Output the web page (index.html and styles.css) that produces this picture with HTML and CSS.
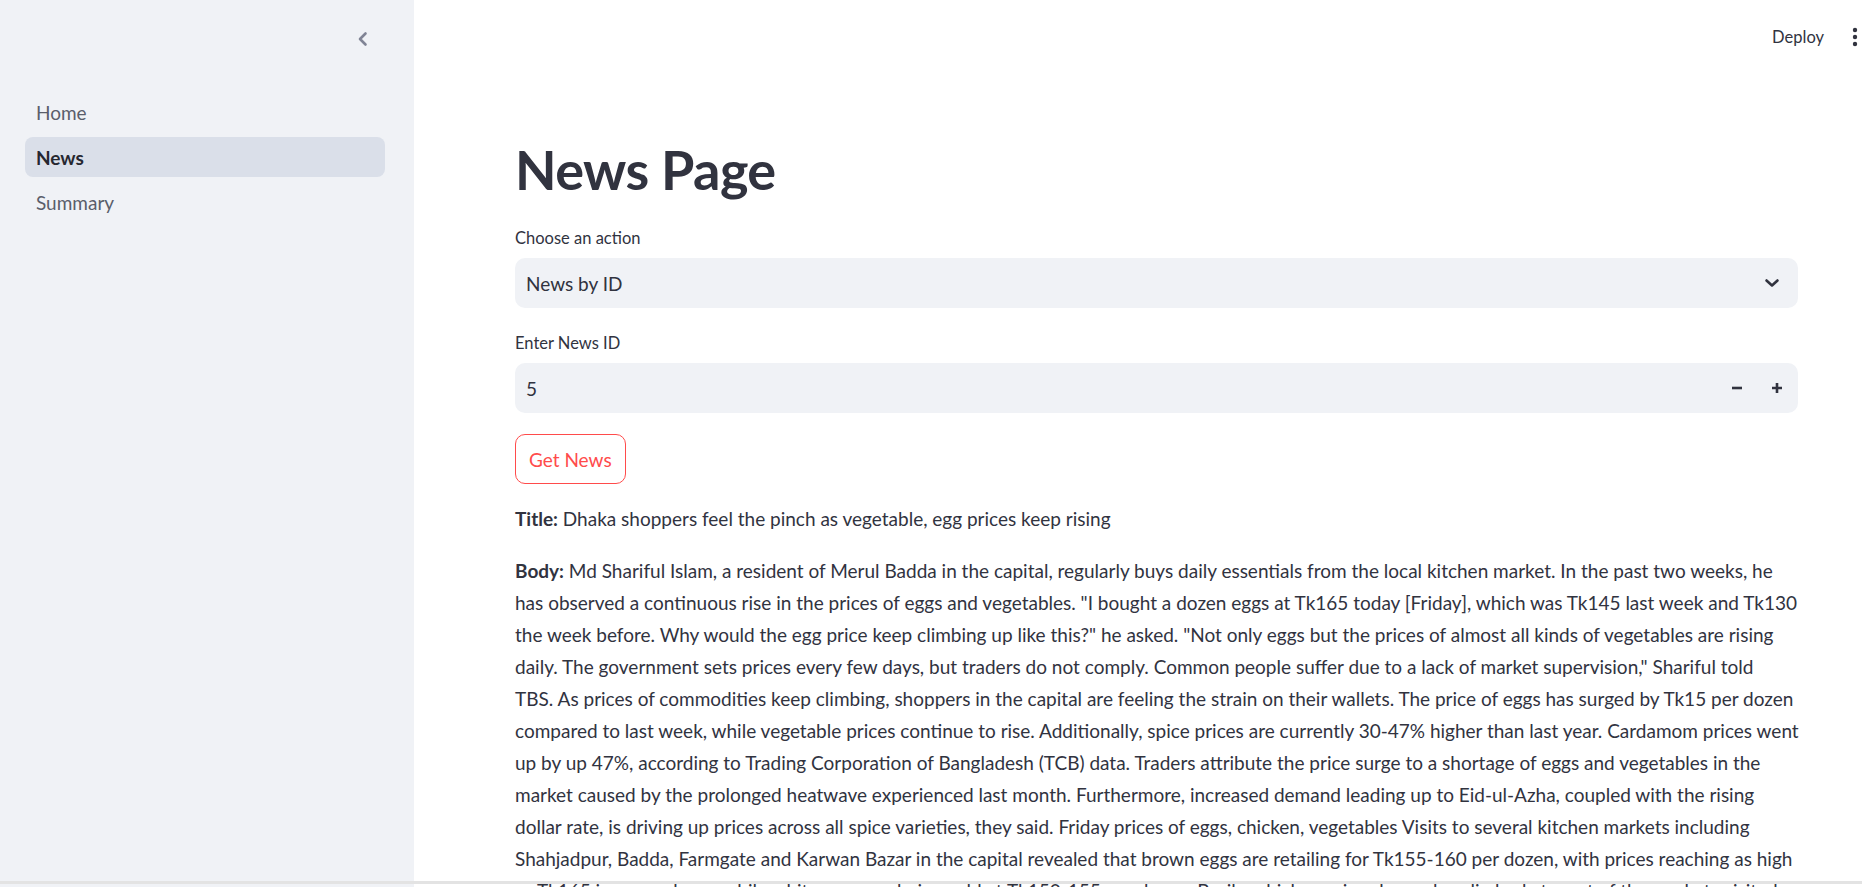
FILE: index.html
```html
<!DOCTYPE html>
<html lang="en">
<head>
<meta charset="utf-8">
<title>News</title>
<link rel="stylesheet" href="styles.css">
</head>
<body>
<div class="app">
  <aside class="sidebar">
    <div class="sidebar-top">
      <button class="collapse-btn" aria-label="Collapse sidebar">
        <svg width="12" height="16" viewBox="0 0 12 16"><path d="M8.5 2.5 L3 8 L8.5 13.5" fill="none" stroke="#808495" stroke-width="2.6" stroke-linecap="round" stroke-linejoin="round"/></svg>
      </button>
    </div>
    <nav class="nav">
      <a class="nav-item">Home</a>
      <a class="nav-item active">News</a>
      <a class="nav-item">Summary</a>
    </nav>
  </aside>
  <main class="main">
    <header class="topbar">
      <span class="deploy">Deploy</span>
      <span class="kebab">
        <svg width="6" height="20" viewBox="0 0 6 20"><circle cx="3" cy="3" r="2.2" fill="#31333f"/><circle cx="3" cy="10" r="2.2" fill="#31333f"/><circle cx="3" cy="17" r="2.2" fill="#31333f"/></svg>
      </span>
    </header>
    <section class="content">
      <h1 class="page-title">News Page</h1>
      <div class="field">
        <label class="field-label">Choose an action</label>
        <div class="select">
          <span>News by ID</span>
          <svg class="select-arrow" width="16" height="10" viewBox="0 0 16 10"><path d="M2.5 2.5 L8 7.5 L13.5 2.5" fill="none" stroke="#31333f" stroke-width="2.6" stroke-linecap="round" stroke-linejoin="round"/></svg>
        </div>
      </div>
      <div class="field">
        <label class="field-label">Enter News ID</label>
        <div class="number-input">
          <span class="number-value">5</span>
          <div class="steppers">
            <span class="step"><svg width="12" height="12" viewBox="0 0 12 12"><path d="M1 6 H11" stroke="#31333f" stroke-width="2.6"/></svg></span>
            <span class="step"><svg width="12" height="12" viewBox="0 0 12 12"><path d="M1 6 H11 M6 1 V11" stroke="#31333f" stroke-width="2.6"/></svg></span>
          </div>
        </div>
      </div>
      <div>
        <button class="btn-outline">Get News</button>
      </div>
      <div class="article">
        <p><strong>Title:</strong> Dhaka shoppers feel the pinch as vegetable, egg prices keep rising</p>
        <p class="body-text"><strong>Body:</strong> Md Shariful Islam, a resident of Merul Badda in the capital, regularly buys daily essentials from the local kitchen market. In the past two weeks, he<br>has observed a continuous rise in the prices of eggs and vegetables. "I bought a dozen eggs at Tk165 today [Friday], which was Tk145 last week and Tk130<br>the week before. Why would the egg price keep climbing up like this?" he asked. "Not only eggs but the prices of almost all kinds of vegetables are rising<br>daily. The government sets prices every few days, but traders do not comply. Common people suffer due to a lack of market supervision," Shariful told<br>TBS. As prices of commodities keep climbing, shoppers in the capital are feeling the strain on their wallets. The price of eggs has surged by Tk15 per dozen<br>compared to last week, while vegetable prices continue to rise. Additionally, spice prices are currently 30-47% higher than last year. Cardamom prices went<br>up by up 47%, according to Trading Corporation of Bangladesh (TCB) data. Traders attribute the price surge to a shortage of eggs and vegetables in the<br>market caused by the prolonged heatwave experienced last month. Furthermore, increased demand leading up to Eid-ul-Azha, coupled with the rising<br>dollar rate, is driving up prices across all spice varieties, they said. Friday prices of eggs, chicken, vegetables Visits to several kitchen markets including<br>Shahjadpur, Badda, Farmgate and Karwan Bazar in the capital revealed that brown eggs are retailing for Tk155-160 per dozen, with prices reaching as high<br>as Tk165 in some shops, while white eggs are being sold at Tk150-155 per dozen. Broiler chicken prices have also climbed at most of the markets visited.</p>
      </div>
    </section>
  </main>
</div>
<div class="bottom-edge"></div>
</body>
</html>
```
FILE: styles.css
```css
* { box-sizing: border-box; }
html, body { margin: 0; padding: 0; }
body {
  font-family: "Lato", "Source Sans Pro", "Noto Sans", sans-serif;
  color: #31333f;
  background: #ffffff;
  font-size: 19px;
}
.app {
  display: flex;
  height: 100vh;
  overflow: hidden;
}
.sidebar {
  width: 414px;
  flex: 0 0 414px;
  background: #f0f2f6;
  padding: 0 29px 0 25px;
}
.sidebar-top {
  height: 80px;
  display: flex;
  justify-content: flex-end;
  align-items: flex-start;
  padding-top: 31px;
  padding-right: 16px;
}
.collapse-btn {
  border: none;
  background: transparent;
  padding: 0;
  width: 12px;
  height: 16px;
  display: flex;
}
.nav {
  display: flex;
  flex-direction: column;
  gap: 5px;
  padding-top: 12px;
}
.nav-item {
  height: 40px;
  display: flex;
  align-items: center;
  padding-left: 11px;
  border-radius: 8px;
  font-size: 19px;
  color: #5a5e6b;
}
.nav-item.active {
  background: #dadfe9;
  color: #262730;
  font-weight: 700;
}
.main {
  flex: 1;
  display: flex;
  flex-direction: column;
  overflow: hidden;
}
.topbar {
  height: 74px;
  flex: 0 0 74px;
  display: flex;
  justify-content: flex-end;
  align-items: center;
  gap: 28px;
  padding-right: 4px;
}
.deploy {
  font-size: 16.5px;
  color: #31333f;
}
.kebab { display: flex; }
.content {
  padding: 63px 64px 0 101px;
  display: flex;
  flex-direction: column;
  gap: 21px;
}
.page-title {
  margin: 0;
  font-size: 54px;
  line-height: 66px;
  font-weight: 700;
  letter-spacing: -0.6px;
  color: #31333f;
}
.field {
  display: flex;
  flex-direction: column;
  gap: 6px;
}
.field-label {
  font-size: 16.5px;
  line-height: 28px;
  color: #31333f;
}
.select, .number-input {
  height: 50px;
  background: #f0f2f6;
  border-radius: 10px;
  display: flex;
  align-items: center;
  justify-content: space-between;
  padding: 0 18px 0 11px;
  font-size: 19px;
}
.number-input { padding-right: 15px; }
.steppers {
  display: flex;
  gap: 28px;
}
.step { display: flex; }
.btn-outline {
  height: 50px;
  padding: 0 13px;
  border: 1px solid #ff4b4b;
  border-radius: 10px;
  background: #ffffff;
  color: #ff4b4b;
  font-family: inherit;
  font-size: 19px;
}
.article { margin-top: -2px; }
.article p {
  margin: 0 0 20px 0;
  line-height: 32px;
  font-size: 19px;
}
.body-text { white-space: nowrap; }
.article strong { font-weight: 700; }
.bottom-edge {
  position: fixed;
  left: 0;
  right: 0;
  bottom: 3px;
  height: 3px;
  background: #e3e3e3;
}
```
